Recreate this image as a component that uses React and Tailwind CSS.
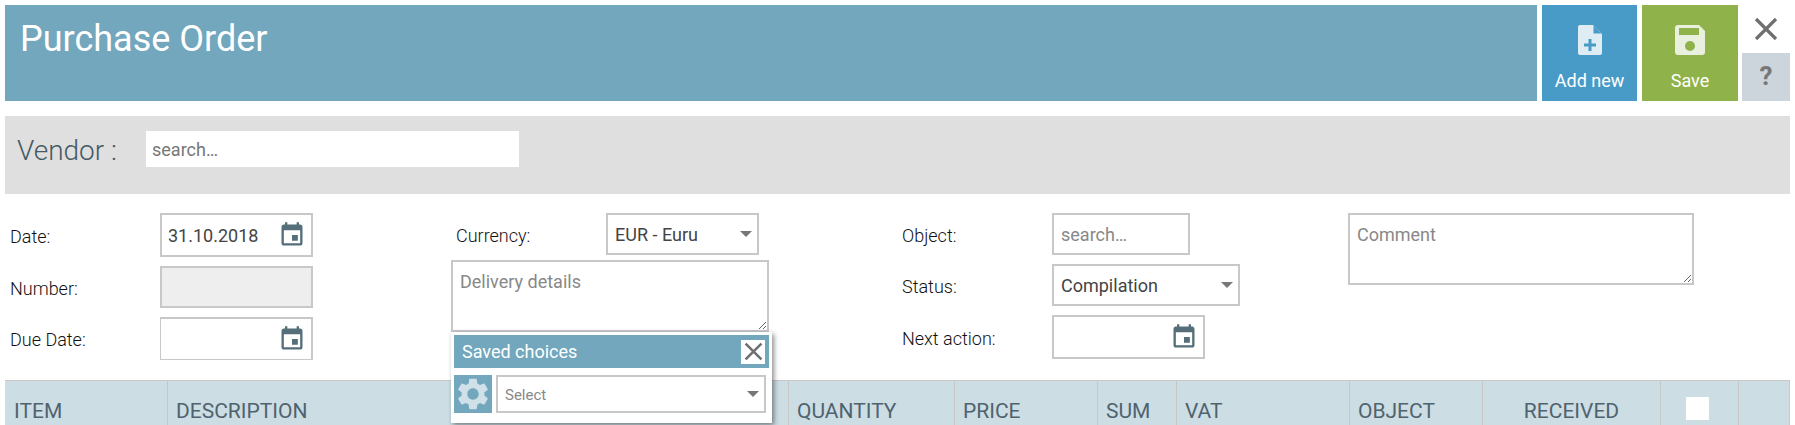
function CalendarIcon() {
  return (
    <svg viewBox="0 0 24 24" className="w-[28px] h-[28px] fill-[#546e7a]">
      <path d="M17 12h-5v5h5v-5zM16 1v2H8V1H6v2H5c-1.11 0-1.99.9-1.99 2L3 19c0 1.1.89 2 2 2h14c1.1 0 2-.9 2-2V5c0-1.1-.9-2-2-2h-1V1h-2zm3 18H5V8h14v11z" />
    </svg>
  );
}

function GearIcon() {
  return (
    <svg viewBox="0 0 24 24" className="w-[38px] h-[38px] fill-[#cfe0e8]">
      <path
        fillRule="evenodd"
        d="M19.14 12.94c.04-.3.06-.61.06-.94 0-.32-.02-.64-.07-.94l2.03-1.58c.18-.14.23-.41.12-.61l-1.92-3.32c-.12-.22-.37-.29-.59-.22l-2.39.96c-.5-.38-1.03-.7-1.62-.94l-.36-2.54c-.04-.24-.24-.41-.48-.41h-3.84c-.24 0-.43.17-.47.41l-.36 2.54c-.59.24-1.13.57-1.62.94l-2.39-.96c-.22-.08-.47 0-.59.22L2.74 8.87c-.12.21-.08.47.12.61l2.03 1.58c-.05.3-.09.63-.09.94s.02.64.07.94l-2.03 1.58c-.18.14-.23.41-.12.61l1.92 3.32c.12.22.37.29.59.22l2.39-.96c.5.38 1.03.7 1.62.94l.36 2.54c.05.24.24.41.48.41h3.84c.24 0 .44-.17.47-.41l.36-2.54c.59-.24 1.13-.56 1.62-.94l2.39.96c.22.08.47 0 .59-.22l1.92-3.32c.12-.22.07-.47-.12-.61l-2.01-1.58zM12 15.600c-1.980 0-3.600-1.620-3.600-3.600s1.620-3.600 3.600-3.600 3.600 1.620 3.600 3.600-1.620 3.600-3.600 3.600z"
      />
    </svg>
  );
}

function CloseIcon({ className }) {
  return (
    <svg viewBox="0 0 24 24" className={className} fill="none" stroke="#6f6f6f" strokeWidth="3.200">
      <path d="M2 2l20 20M22 2L2 22" />
    </svg>
  );
}

function Caret() {
  return (
    <span className="absolute right-[7px] top-1/2 -mt-[3px] w-0 h-0 border-x-[6px] border-x-transparent border-t-[6px] border-t-[#777] pointer-events-none" />
  );
}

function DateField({ value, className, borderClass = "border-2" }) {
  return (
    <div className={"flex items-center justify-between border-[#c8c8c8] pl-[6px] pr-[5px] " + borderClass + " " + className}>
      <input
        defaultValue={value}
        className="w-[100px] pt-[1px] outline-none text-[18px] font-normal text-[#444]"
      />
      <CalendarIcon />
    </div>
  );
}

function SelectField({ options, className, textClass = "text-[18px] font-normal text-[#444]" }) {
  return (
    <div className={"relative " + className}>
      <select className={"w-full h-full appearance-none bg-white border-2 border-[#c8c8c8] pl-[7px] outline-none " + textClass}>
        {options.map((o) => (
          <option key={o}>{o}</option>
        ))}
      </select>
      <Caret />
    </div>
  );
}

function Label({ children }) {
  return <span className="w-[150px] pt-[2px]">{children}</span>;
}

const columns = [
  { label: "ITEM", w: "w-[162px]" },
  { label: "DESCRIPTION", w: "w-[621px]" },
  { label: "QUANTITY", w: "w-[166px]" },
  { label: "PRICE", w: "w-[143px]" },
  { label: "SUM", w: "w-[79px]" },
  { label: "VAT", w: "w-[173px]" },
  { label: "OBJECT", w: "w-[133px]" },
  { label: "RECEIVED", w: "w-[178px]", center: true },
];

export default function App() {
  return (
    <div className="w-[1795px] h-[425px] overflow-hidden bg-white pt-[5px] font-['Roboto',sans-serif] font-light text-[18px] text-[#111]">
      {/* header */}
      <header className="flex h-[96px] mx-[5px]">
        <div className="w-[1532px] bg-[#72a7bd] pl-[15px] pt-[10px] text-white text-[36px] font-normal leading-[48px]">
          Purchase Order
        </div>
        <button className="w-[95px] ml-[5px] bg-[#489bc7] text-white font-normal flex flex-col items-center pt-[20px] text-[18px]">
          <svg viewBox="0 0 24 30" className="w-[24px] h-[30px]">
            <path d="M2 0h13l9 9v19a2 2 0 0 1-2 2H2a2 2 0 0 1-2-2V2a2 2 0 0 1 2-2z" fill="#deecf4" />
            <path d="M15.500 0.500l8 8h-8z" fill="#489bc7" />
            <path d="M10.500 14h3v4.500H18v3h-4.500V26h-3v-4.500H6v-3h4.500z" fill="#489bc7" />
          </svg>
          <span className="mt-[14px] leading-[24px]">Add new</span>
        </button>
        <button className="w-[96px] ml-[5px] bg-[#8fb34a] text-white font-normal flex flex-col items-center pt-[20px] text-[18px]">
          <svg viewBox="0 0 30 30" className="w-[30px] h-[30px]">
            <path d="M3 0h21l6 6v21a3 3 0 0 1-3 3H3a3 3 0 0 1-3-3V3a3 3 0 0 1 3-3z" fill="#e9f0dd" />
            <rect x="4" y="3" width="20" height="7" fill="#8fb34a" />
            <circle cx="15" cy="21" r="5" fill="#8fb34a" />
          </svg>
          <span className="mt-[14px] leading-[24px]">Save</span>
        </button>
        <div className="w-[48px] ml-[4px] flex flex-col">
          <div className="h-[48px] flex items-center justify-center">
            <CloseIcon className="w-[24px] h-[24px]" />
          </div>
          <div className="h-[48px] bg-[#ccd4dc] flex items-center justify-center text-[#777] text-[26px] font-bold pb-[2px]">
            ?
          </div>
        </div>
      </header>

      {/* vendor */}
      <section className="flex h-[78px] mt-[15px] mx-[5px] bg-[#dfdfdf] pt-[15px]">
        <span className="ml-[12px] w-[129px] text-[28px] text-[#455a64] leading-[40px]">Vendor :</span>
        <input
          placeholder="search…"
          className="w-[373px] h-[36px] bg-white pl-[6px] text-[18px] font-normal outline-none placeholder:text-[#777]"
        />
      </section>

      {/* form */}
      <section className="grid grid-cols-[446px_446px_446px_446px] h-[167px] mt-[19px] pl-[10px]">
        <div className="flex flex-col">
          <div className="flex items-center">
            <Label>Date:</Label>
            <DateField value="31.10.2018" className="w-[153px] h-[44px]" />
          </div>
          <div className="flex items-center mt-[9px]">
            <Label>Number:</Label>
            <div className="w-[153px] h-[42px] border-2 border-[#c8c8c8] bg-[#eeeeee]" />
          </div>
          <div className="flex items-center mt-[9px]">
            <Label>Due Date:</Label>
            <DateField
              className="w-[153px] h-[43px]"
              borderClass="border-t-2 border-r-2 border-l border-b"
            />
          </div>
        </div>

        <div className="flex flex-col">
          <div className="flex items-center">
            <Label>Currency:</Label>
            <SelectField options={["EUR - Euru"]} className="w-[153px] h-[42px]" />
          </div>
          <div className="relative -ml-[5px] mt-[5px] w-[318px] h-[72px]">
            <textarea
              placeholder="Delivery details"
              className="block w-full h-full border-2 border-[#c8c8c8] px-[7px] py-[6px] text-[18px] font-normal outline-none placeholder:text-[#888]"
            />
            {/* saved choices popup */}
            <div className="absolute left-0 top-full z-10 w-[321px] h-[91px] bg-white pl-[3px] pr-[3px] pt-[3px] shadow-[2px_2px_5px_rgba(0,0,0,0.45)]">
              <div className="flex items-center justify-between h-[33px] bg-[#72a7bd] pl-[8px] pr-[4px] text-white font-normal text-[18px]">
                <span>Saved choices</span>
                <span className="flex items-center justify-center w-[24px] h-[24px] bg-white">
                  <CloseIcon className="w-[19px] h-[19px]" />
                </span>
              </div>
              <div className="flex mt-[7px] h-[38px]">
                <span className="flex items-center justify-center w-[38px] bg-[#72a7bd]">
                  <GearIcon />
                </span>
                <SelectField
                  options={["Select"]}
                  className="w-[270px] ml-[4px]"
                  textClass="text-[15px] font-normal text-[#888] pt-[2px]"
                />
              </div>
            </div>
          </div>
        </div>

        <div className="flex flex-col">
          <div className="flex items-center">
            <Label>Object:</Label>
            <input
              placeholder="search…"
              className="w-[138px] h-[42px] border-2 border-[#c8c8c8] pl-[7px] text-[18px] font-normal outline-none placeholder:text-[#888]"
            />
          </div>
          <div className="flex items-center mt-[9px]">
            <Label>Status:</Label>
            <SelectField options={["Compilation"]} className="w-[188px] h-[42px]" />
          </div>
          <div className="flex items-center mt-[9px]">
            <Label>Next action:</Label>
            <DateField className="w-[153px] h-[44px]" />
          </div>
        </div>

        <div>
          <textarea
            placeholder="Comment"
            className="block w-[346px] h-[72px] border-2 border-[#c8c8c8] px-[7px] py-[6px] text-[18px] font-normal outline-none placeholder:text-[#888]"
          />
        </div>
      </section>

      {/* table header */}
      <div className="flex h-[60px] ml-[5px] w-[1785px] bg-[#ccdde4] border-t border-[#c8c8c8] text-[21px] font-normal text-[#4f636f]">
        {columns.map((c, i) => (
          <div
            key={c.label}
            className={
              c.w +
              " flex items-center pt-[2px] border-r border-[#c8c8c8] " +
              (i === 0 ? "ml-[1px] " : "") +
              (c.center ? "justify-center" : "pl-[8px]")
            }
          >
            {c.label}
          </div>
        ))}
        <div className="w-[78px] flex items-center justify-center border-r border-[#c8c8c8]">
          <span className="w-[23px] h-[23px] bg-white -mt-[4px] mr-[5px]" />
        </div>
        <div className="flex-1 border-r border-[#c8c8c8]" />
      </div>
    </div>
  );
}
